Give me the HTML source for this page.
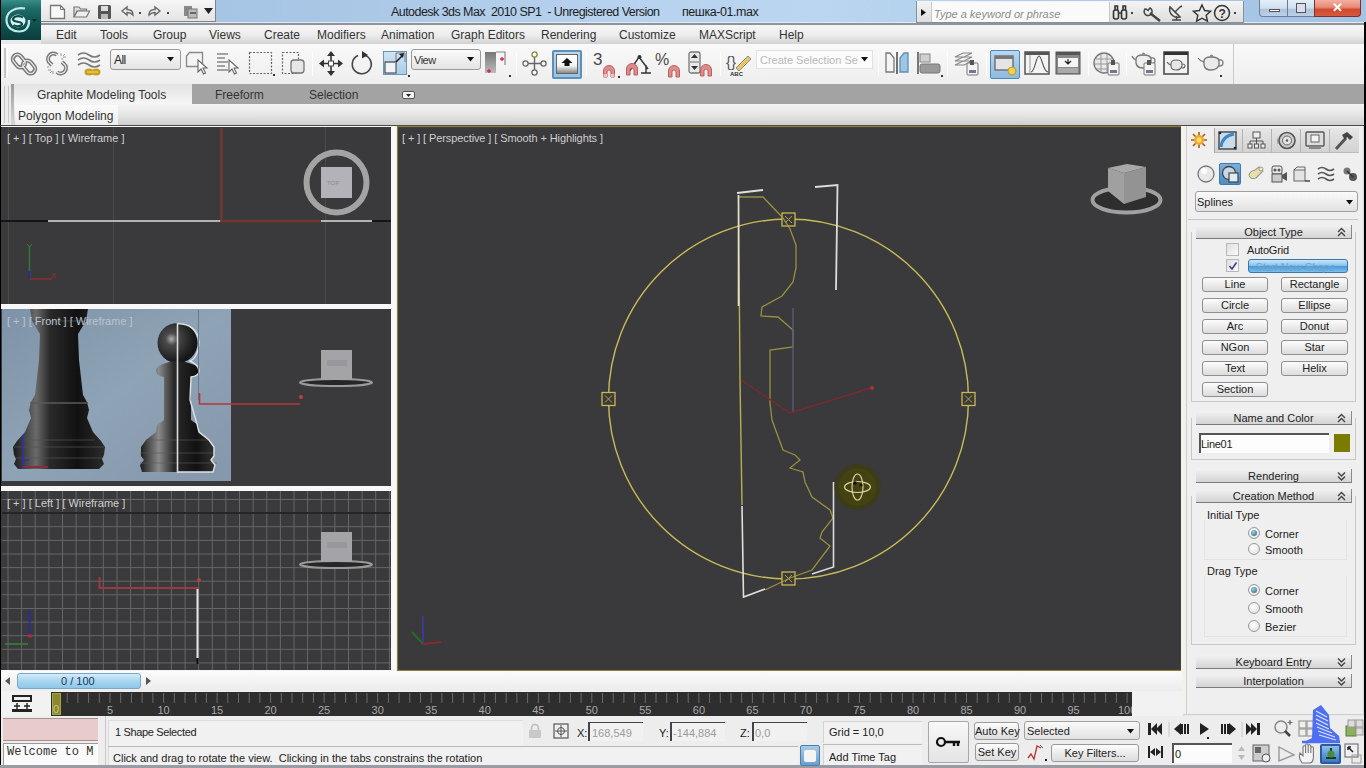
<!DOCTYPE html>
<html><head><meta charset="utf-8">
<style>
*{margin:0;padding:0;box-sizing:border-box}
html,body{width:1366px;height:768px;overflow:hidden;background:#e9e9e9;font-family:"Liberation Sans",sans-serif;position:relative}
.a{position:absolute}
.t{position:absolute;white-space:nowrap;font-size:12px;color:#333;line-height:14px}
svg{position:absolute;overflow:visible}
.sep{position:absolute;width:1px;height:24px;background:#c8c8c8;border-right:1px solid #fff}
.btn{position:absolute;border:1px solid #8f8f8f;border-radius:3px;background:linear-gradient(180deg,#fdfdfd 0%,#ececec 50%,#dcdcdc 100%);font-size:11px;color:#222;text-align:center;line-height:13px;white-space:nowrap}
.rh{position:absolute;left:1196px;width:156px;height:14px;background:linear-gradient(180deg,#f2f2f2,#d4d4d4);border-bottom:1px solid #7a7a7a;border-right:1px solid #8a8a8a;font-size:11px;color:#222;text-align:center;line-height:14px}
.rh i{position:absolute;right:6px;top:0;font-style:normal;font-size:9px;color:#444;line-height:7px;letter-spacing:0}
.vl{position:absolute;font-size:11px;color:#cfcfcf;white-space:nowrap;line-height:12px}
.tk{position:absolute;font-size:11px;color:#a8a8a8;line-height:11px}
.radio{position:absolute;width:12px;height:12px;border-radius:50%;border:1px solid #9a9a9a;background:radial-gradient(circle at 40% 35%,#fff,#dcdcdc)}
.radio.on:after{content:"";position:absolute;left:2px;top:2px;width:6px;height:6px;border-radius:50%;background:radial-gradient(circle at 40% 35%,#9fd0e8,#1d5f80)}
</style></head><body>

<!-- ============ TITLE BAR ============ -->
<div class="a" style="left:0;top:0;width:1366px;height:22px;background:linear-gradient(90deg,#9fbfe0 0%,#aac7e6 25%,#b6d2ee 45%,#bad6f0 60%,#a9c8e8 85%,#a5c3e3 100%)"></div>
<div class="a" style="left:0;top:23px;width:1366px;height:2px;background:#8c939c"></div>
<div class="a" style="left:0;top:0;width:1px;height:768px;background:#000"></div>
<!-- logo -->
<div class="a" style="left:1px;top:0;width:40px;height:40px;background:linear-gradient(180deg,#3a8c88 0%,#1d6a67 22%,#0f5250 60%,#0a3e3d 100%)"></div>
<svg style="left:1px;top:0" width="40" height="40" viewBox="0 0 40 40">
 <path d="M24 8.5 C14 6.5 5 12 5.5 20.5 C6 28 12 31.5 18 31.5 C25 31.5 28.5 27 28 20" fill="none" stroke="#bfeaea" stroke-width="2.2"/>
 <ellipse cx="17" cy="21" rx="7.5" ry="6.5" fill="#d4f2f2"/>
 <path d="M22 17.5 C19 15 12 16 12 19.5 C12 22.5 21 21 21 24 C21 26.5 15 27 12.5 25" fill="none" stroke="#0f4a48" stroke-width="2.2"/>
 <path d="M31 19 l5 0 l-2.5 3z" fill="#062a2a"/>
</svg>
<!-- QAT -->
<div class="a" style="left:41px;top:0;width:175px;height:22px;background:linear-gradient(180deg,#f6f6f6,#e4e4e4);border-right:1px solid #7d838a;border-bottom:1px solid #7d838a"></div>
<svg style="left:49px;top:4px" width="18" height="16"><path d="M1.5 1.5 h10 l4 4 v9 h-14z" fill="#f8f8f8" stroke="#777" stroke-width="1.3"/><path d="M11.5 1.5 v4 h4" fill="none" stroke="#777" stroke-width="1"/></svg>
<svg style="left:73px;top:5px" width="18" height="14"><path d="M1 2 h5 l1.5 2 h6 v2 H4 L1 12z" fill="#ddd" stroke="#777" stroke-width="1.2"/><path d="M1 12 L4.5 6 h12 l-3 6z" fill="#eee" stroke="#777" stroke-width="1.2"/></svg>
<svg style="left:97px;top:4px" width="15" height="16"><rect x="1" y="1" width="13" height="14" rx="1.5" fill="#555"/><rect x="4" y="2" width="7" height="5" fill="#ddd"/><rect x="4" y="10" width="7" height="5" fill="#bbb"/></svg>
<svg style="left:119px;top:5px" width="30" height="14"><path d="M3 6 L8 2 V4.5 C12 4.5 14 6 14 10 C12 8 11 7.5 8 7.5 V10z" fill="none" stroke="#666" stroke-width="1.4"/><rect x="20" y="7" width="2" height="2" fill="#444"/></svg>
<svg style="left:147px;top:5px" width="30" height="14"><path d="M13 6 L8 2 V4.5 C4 4.5 2 6 2 10 C4 8 5 7.5 8 7.5 V10z" fill="none" stroke="#666" stroke-width="1.4"/><rect x="20" y="7" width="2" height="2" fill="#444"/></svg>
<svg style="left:183px;top:4px" width="18" height="16"><rect x="1" y="2" width="8" height="10" fill="#888"/><rect x="5" y="5" width="9" height="9" fill="#bbb" stroke="#777"/><rect x="7" y="8" width="6" height="2" fill="#666"/></svg>
<svg style="left:204px;top:8px" width="10" height="8"><path d="M0 0 h9 l-4.5 6z" fill="#222"/></svg>
<!-- title -->
<div class="t" style="left:391px;top:5px;font-size:12.5px;color:#1e1e1e;letter-spacing:-0.55px">Autodesk 3ds Max&nbsp; 2010 SP1&nbsp; - Unregistered Version</div>
<div class="t" style="left:682px;top:5px;font-size:12.5px;color:#1e1e1e;letter-spacing:-0.45px">пешка-01.max</div>
<!-- info center -->
<div class="a" style="left:916px;top:1px;width:328px;height:22px;background:linear-gradient(180deg,#f4f4f4,#dedede);border:1px solid #8a9098;border-top:none"></div>
<svg style="left:921px;top:9px" width="6" height="8"><path d="M0 0 L5 3.5 L0 7z" fill="#111"/></svg>
<div class="a" style="left:931px;top:2px;width:179px;height:20px;background:#fafafa;border-left:1px solid #c8c8c8;border-right:1px solid #c8c8c8"></div>
<div class="t" style="left:934px;top:7px;font-size:11px;font-style:italic;color:#8c8c8c">Type a keyword or phrase</div>
<svg style="left:1112px;top:4px" width="130" height="18">
 <g fill="none" stroke="#333" stroke-width="1.6"><rect x="1.5" y="6" width="5" height="9" rx="2"/><rect x="9.5" y="6" width="5" height="9" rx="2"/><path d="M3 6 V2 h2.5 V6 M11 6 V2 h2.5 V6 M6.5 9 h3"/></g>
 <rect x="19" y="8" width="2" height="2" fill="#444"/>
 <path d="M33 5 a4 4 0 1 0 5 -1 l-2 2.5 l-2 -1.5z" fill="none" stroke="#444" stroke-width="1.5"/><path d="M38 9 L48 17" stroke="#444" stroke-width="2.4"/>
 <path d="M58 3 a8 8 0 0 0 10 10z" fill="none" stroke="#444" stroke-width="1.5"/><path d="M63 8 l5 -5 M68 3 l2 -1 M60 16 h9 M64.5 12 v4" stroke="#444" stroke-width="1.4"/>
 <path d="M90 1 l2.6 5.5 l6 .7 l-4.4 4 l1.2 6 l-5.4-3 l-5.4 3 l1.2-6 l-4.4-4 l6-.7z" fill="none" stroke="#333" stroke-width="1.4"/>
 <circle cx="110" cy="9" r="7.5" fill="none" stroke="#333" stroke-width="1.5"/><text x="106.5" y="13.5" font-size="12" font-weight="bold" fill="#333" font-family="Liberation Sans">?</text>
 <rect x="122" y="8" width="2" height="2" fill="#444"/>
</svg>
<!-- window buttons -->
<div class="a" style="left:1259px;top:0;width:56px;height:17px;border:1px solid #6d7f96;border-top:none;border-radius:0 0 0 4px;background:linear-gradient(180deg,#e4eef8 0%,#d0e0f0 50%,#aec4dc 60%,#bcd0e6 100%)"></div>
<div class="a" style="left:1287px;top:0;width:1px;height:17px;background:#6d7f96"></div>
<div class="a" style="left:1269px;top:9px;width:11px;height:3px;background:#fff;border:1px solid #555"></div>
<div class="a" style="left:1296px;top:3px;width:10px;height:10px;border:1px solid #555;background:#dde"></div>
<div class="a" style="left:1314px;top:0;width:47px;height:17px;border:1px solid #7a3030;border-top:none;border-radius:0 0 4px 0;background:linear-gradient(180deg,#f4b0a0 0%,#e88a78 45%,#d0482e 60%,#d85a40 100%)"></div>
<div class="t" style="left:1332px;top:1px;font-size:13px;font-weight:bold;color:#fff">✕</div>

<!-- ============ MENU BAR ============ -->
<div class="a" style="left:41px;top:25px;width:1325px;height:19px;background:linear-gradient(180deg,#f6f6f6 0%,#ececec 55%,#d2d2d2 100%)"></div>
<div class="t" style="left:56px;top:28px">Edit</div>
<div class="t" style="left:100px;top:28px">Tools</div>
<div class="t" style="left:153px;top:28px">Group</div>
<div class="t" style="left:209px;top:28px">Views</div>
<div class="t" style="left:264px;top:28px">Create</div>
<div class="t" style="left:317px;top:28px">Modifiers</div>
<div class="t" style="left:381px;top:28px">Animation</div>
<div class="t" style="left:451px;top:28px">Graph Editors</div>
<div class="t" style="left:541px;top:28px">Rendering</div>
<div class="t" style="left:619px;top:28px">Customize</div>
<div class="t" style="left:699px;top:28px">MAXScript</div>
<div class="t" style="left:779px;top:28px">Help</div>

<!-- ============ MAIN TOOLBAR ============ -->
<div class="a" style="left:1px;top:44px;width:1365px;height:40px;background:linear-gradient(180deg,#f9f9f9,#eeeeee)"></div>
<div class="a" style="left:1px;top:44px;width:1233px;height:40px;border-right:1px solid #c9c9c9"></div>
<div class="a" style="left:4px;top:48px;width:2px;height:30px;background:#c4c4c4"></div>
<div class="a" style="left:7px;top:48px;width:1px;height:30px;background:#fff"></div>
<!-- link -->
<svg style="left:12px;top:51px" width="25" height="25"><g fill="none" stroke="#7a7a7a" stroke-width="4.2"><rect x="2.5" y="3" width="9" height="14" rx="4.5" transform="rotate(-40 7 10)"/><rect x="12.5" y="9" width="9" height="14" rx="4.5" transform="rotate(-40 17 16)"/></g><g fill="none" stroke="#f0f0f0" stroke-width="1.2"><rect x="2.5" y="3" width="9" height="14" rx="4.5" transform="rotate(-40 7 10)"/><rect x="12.5" y="9" width="9" height="14" rx="4.5" transform="rotate(-40 17 16)"/></g></svg>
<!-- unlink -->
<svg style="left:44px;top:51px" width="26" height="25"><g fill="none" stroke="#7a7a7a" stroke-width="4"><path d="M13 4 a5 5 0 0 0 -8 1 a5 5 0 0 0 1 7 l2 2"/><path d="M13 21 a5 5 0 0 0 8-1 a5 5 0 0 0 -1-7 l-2-2"/></g><g fill="none" stroke="#f0f0f0" stroke-width="1.1"><path d="M13 4 a5 5 0 0 0 -8 1 a5 5 0 0 0 1 7 l2 2"/><path d="M13 21 a5 5 0 0 0 8-1 a5 5 0 0 0 -1-7 l-2-2"/></g><g stroke="#9a9a9a" stroke-width="1"><path d="M17 2 v3 M19 6 h3 M17 8 l2 0 M21 3 l-2 2 M4 19 h3 M6 22 l2-2 M9 20 v3 M3 16 h2"/></g></svg>
<!-- bind spacewarp -->
<svg style="left:77px;top:51px" width="26" height="25"><g fill="none" stroke="#7a7a7a" stroke-width="1.6"><path d="M1 4 q5.5-4 11 0 t11 0"/><path d="M1 9 q5.5-4 11 0 t11 0"/><path d="M1 14 q5.5-4 11 0 t11 0"/></g><g fill="none" stroke="#c8a020" stroke-width="3"><ellipse cx="12" cy="21" rx="3" ry="2"/><ellipse cx="19" cy="21" rx="3" ry="2"/></g><path d="M10 21 h11" stroke="#e8c040" stroke-width="2"/></svg>
<!-- All dropdown -->
<div class="a" style="left:110px;top:49px;width:71px;height:21px;border:1px solid #9a9a9a;border-radius:3px;background:linear-gradient(180deg,#fafafa,#e4e4e4)"></div>
<div class="t" style="left:114px;top:53px;font-size:12px;color:#222;letter-spacing:-0.6px">All</div>
<svg style="left:167px;top:57px" width="8" height="6"><path d="M0 0h7l-3.5 4.5z" fill="#111"/></svg>
<!-- select object -->
<svg style="left:185px;top:51px" width="24" height="25"><path d="M1.5 5 l3-3.5 h13 v14 h-16z" fill="#f4f4f4" stroke="#888" stroke-width="1.3"/><path d="M13 9 v12 l3-3 l2.5 5 l2-1 l-2.5-5 h4z" fill="#fff" stroke="#666" stroke-width="1.1"/></svg>
<!-- select by name -->
<svg style="left:216px;top:51px" width="26" height="25"><g stroke="#888" stroke-width="1.5"><path d="M1 3h11M1 7h8M1 11h11M1 15h8M1 19h11"/></g><path d="M13 9 v12 l3-3 l2.5 5 l2-1 l-2.5-5 h4z" fill="#fff" stroke="#666" stroke-width="1.1"/></svg>
<!-- rect select -->
<svg style="left:248px;top:51px" width="27" height="25"><rect x="1.5" y="1.5" width="22" height="21" fill="none" stroke="#666" stroke-width="1.2" stroke-dasharray="2 1.5"/><rect x="25" y="23" width="2" height="2" fill="#333"/></svg>
<!-- window/crossing -->
<svg style="left:281px;top:51px" width="25" height="25"><rect x="1.5" y="1.5" width="16" height="21" fill="none" stroke="#666" stroke-width="1.2" stroke-dasharray="2 1.5"/><rect x="10" y="9" width="13" height="13" rx="3" fill="#e6e6e6" stroke="#777" stroke-width="1.3"/></svg>
<div class="sep" style="left:312px;top:52px"></div>
<!-- move -->
<svg style="left:319px;top:51px" width="24" height="25"><g fill="#333"><path d="M12 0 l4 5 h-8z"/><path d="M12 25 l4-5 h-8z"/><path d="M0 12.5 l5-4 v8z"/><path d="M24 12.5 l-5-4 v8z"/></g><path d="M12 4 v17 M4 12.5 h16" stroke="#333" stroke-width="1.6"/><rect x="9.5" y="10" width="5" height="5" fill="#fff" stroke="#444"/></svg>
<!-- rotate -->
<svg style="left:351px;top:51px" width="23" height="25"><path d="M13 4 a9.5 9.5 0 1 1 -6 0.5" fill="none" stroke="#444" stroke-width="1.6"/><path d="M11 0 l6 4 l-6 3.5z" fill="#333"/></svg>
<!-- scale (active) -->
<div class="a" style="left:383px;top:51px;width:24px;height:24px;background:linear-gradient(180deg,#cfe4f4,#a9cde8);border:1px solid #6b95bb"></div>
<svg style="left:383px;top:51px" width="27" height="26"><rect x="2" y="11" width="11" height="11" fill="#eef4f8" stroke="#555" stroke-width="1.2"/><path d="M2 11 h11 v-9 h9 v9" fill="none" stroke="#777" stroke-width="1"/><path d="M13 11 L20 4" stroke="#222" stroke-width="1.6"/><path d="M21 2 l-5 1 l4 4z" fill="#222"/><rect x="25" y="24" width="2" height="2" fill="#333"/></svg>
<!-- View dropdown -->
<div class="a" style="left:411px;top:49px;width:70px;height:21px;border:1px solid #9a9a9a;border-radius:3px;background:linear-gradient(180deg,#fafafa,#e4e4e4)"></div>
<div class="t" style="left:414px;top:53px;font-size:11px;color:#333;letter-spacing:-0.5px">View</div>
<svg style="left:467px;top:57px" width="8" height="6"><path d="M0 0h7l-3.5 4.5z" fill="#111"/></svg>
<!-- pivot -->
<svg style="left:484px;top:51px" width="28" height="26"><rect x="1" y="1" width="11" height="21" fill="#8a8a8a"/><rect x="1" y="1" width="11" height="21" fill="url(#g1)"/><path d="M12 1 h9 v13" fill="#f4f4f4" stroke="#888" stroke-width="1.2"/><path d="M16 8 h4 M18 6 v4 M3 20 h4 M5 18 v4" stroke="#e02040" stroke-width="1.3"/><rect x="25" y="24" width="2" height="2" fill="#333"/><defs><linearGradient id="g1" x1="0" x2="0" y1="0" y2="1"><stop offset="0" stop-color="#777"/><stop offset="1" stop-color="#bbb"/></linearGradient></defs></svg>
<div class="sep" style="left:516px;top:52px"></div>
<!-- manipulate -->
<svg style="left:522px;top:51px" width="25" height="25"><path d="M12.5 5 v15 M4 12.5 h17" stroke="#666" stroke-width="1.4"/><g fill="#f8f8f8" stroke="#666" stroke-width="1.3"><circle cx="12.5" cy="3.5" r="2.6" stroke="#8a8a40"/><circle cx="12.5" cy="21.5" r="2.6"/><circle cx="3.5" cy="12.5" r="2.6"/><circle cx="21.5" cy="12.5" r="2.6"/></g></svg>
<!-- keyboard override active -->
<div class="a" style="left:552px;top:50px;width:30px;height:29px;border:2px solid #5b8fbd;border-radius:2px;background:linear-gradient(180deg,#bcd8ee,#9cc2e0)"></div>
<div class="a" style="left:556px;top:54px;width:22px;height:20px;background:linear-gradient(180deg,#fff,#f4f4f4 60%,#888 100%);border:1px solid #666"></div>
<svg style="left:561px;top:58px" width="12" height="9"><path d="M6 0 l5.5 5 h-3 v3 h-5 v-3 h-3z" fill="#111"/></svg>
<div class="sep" style="left:586px;top:52px"></div>
<!-- snaps -->
<div class="t" style="left:593px;top:51px;font-size:17px;color:#4a4a4a;line-height:18px">3</div>
<svg style="left:602px;top:64px" width="14" height="14"><path d="M1.5 13 v-6 a5.5 5.5 0 0 1 11 0 v6 h-3.5 v-5 a2 2 0 0 0 -4 0 v5z" fill="#e08a8a" stroke="#b86060" stroke-width="1"/><rect x="1.5" y="10" width="3.5" height="3" fill="#f0c0c0"/><rect x="9" y="10" width="3.5" height="3" fill="#f0c0c0"/></svg>
<rect/>
<svg style="left:618px;top:76px" width="2" height="2"><rect width="2" height="2" fill="#333"/></svg>
<svg style="left:625px;top:51px" width="27" height="26"><path d="M4 21 L14 6 L23 18 M16 22 h10 M21 14 v8" fill="none" stroke="#333" stroke-width="1.4"/><circle cx="14.5" cy="6" r="2" fill="#333"/><path d="M1.5 26 v-6 a5.5 5.5 0 0 1 11 0 v6 h-3.5 v-5 a2 2 0 0 0 -4 0 v5z" fill="#e08a8a" stroke="#b86060" stroke-width="1" transform="translate(0,-2)"/></svg>
<div class="t" style="left:655px;top:51px;font-size:16px;color:#4a4a4a;line-height:18px">%</div>
<svg style="left:667px;top:64px" width="14" height="14"><path d="M1.5 13 v-6 a5.5 5.5 0 0 1 11 0 v6 h-3.5 v-5 a2 2 0 0 0 -4 0 v5z" fill="#e08a8a" stroke="#b86060" stroke-width="1"/></svg>
<svg style="left:688px;top:51px" width="26" height="26"><rect x="1" y="1" width="11" height="21" rx="2" fill="#e8e8e8" stroke="#777" stroke-width="1.3"/><path d="M3 7 l3.5-4 l3.5 4z M3 15 l3.5 4 l3.5-4z" fill="#333"/><path d="M2 11 h9" stroke="#777"/><path d="M12.5 25 v-6 a5.5 5.5 0 0 1 11 0 v6 h-3.5 v-5 a2 2 0 0 0 -4 0 v5z" fill="#e08a8a" stroke="#b86060" stroke-width="1"/></svg>
<div class="sep" style="left:720px;top:52px"></div>
<!-- edit named sel -->
<svg style="left:726px;top:51px" width="28" height="26"><text x="0" y="16" font-size="15" fill="#555" font-family="Liberation Sans">{}</text><path d="M10 17 L22 5 l3 3 L13 20z" fill="#e8c860" stroke="#888" stroke-width="1"/><text x="4" y="25" font-size="6" font-weight="bold" fill="#333" font-family="Liberation Sans">ABC</text></svg>
<!-- create selection set -->
<div class="a" style="left:756px;top:50px;width:117px;height:19px;background:#fcfcfc;border:1px solid #e2e2e2"></div>
<div class="t" style="left:760px;top:53px;font-size:11px;color:#b8b8b8">Create Selection Se</div>
<svg style="left:861px;top:57px" width="8" height="6"><path d="M0 0h7l-3.5 4.5z" fill="#111"/></svg>
<div class="sep" style="left:878px;top:52px"></div>
<!-- mirror -->
<svg style="left:884px;top:51px" width="26" height="25"><path d="M2 2 h4 l4 5 v14 h-8z" fill="#f4f4f4" stroke="#777" stroke-width="1.3"/><path d="M13 1 v22" stroke="#444" stroke-width="1.5"/><path d="M24 2 h-4 l-4 5 v14 h8z" fill="#9cc6e4" stroke="#5e8fb8" stroke-width="1.3"/></svg>
<!-- align -->
<svg style="left:916px;top:51px" width="27" height="26"><path d="M2 1 v22" stroke="#777" stroke-width="2"/><rect x="4" y="3" width="10" height="8" fill="#cfcfcf" stroke="#888"/><rect x="4" y="13" width="20" height="9" rx="2" fill="#9a9a9a" stroke="#777"/><rect x="25" y="24" width="2" height="2" fill="#333"/></svg>
<div class="sep" style="left:947px;top:52px"></div>
<!-- layers -->
<svg style="left:954px;top:51px" width="26" height="25"><g fill="#f0f0f0" stroke="#888" stroke-width="1.1"><path d="M1 14 l8-4 h9 l-8 4z"/><path d="M1 10 l8-4 h9 l-8 4z"/><path d="M1 6 l8-4 h9 l-8 4z"/></g><rect x="13" y="12" width="11" height="12" rx="1" fill="#f4f4f4" stroke="#777"/><rect x="16" y="9" width="4" height="5" fill="#555"/><rect x="15" y="19" width="7" height="3" fill="#778"/></svg>
<div class="sep" style="left:986px;top:52px"></div>
<!-- graphite toggle active -->
<div class="a" style="left:990px;top:50px;width:30px;height:29px;border:1px solid #4f86bb;border-radius:2px;background:linear-gradient(180deg,#b9d6ee,#8ebbe0)"></div>
<svg style="left:994px;top:54px" width="24" height="22"><rect x="1" y="2" width="18" height="14" fill="#e4e4e4" stroke="#666" stroke-width="1.3"/><rect x="1" y="2" width="18" height="3" fill="#777"/><circle cx="18" cy="17" r="4" fill="#f0d050" stroke="#c09a20"/></svg>
<!-- curve editor -->
<svg style="left:1024px;top:51px" width="26" height="25"><rect x="1" y="1" width="24" height="22" fill="#f4f4f4" stroke="#555" stroke-width="1.5"/><rect x="1" y="1" width="24" height="3" fill="#555"/><path d="M6 4 v18" stroke="#999"/><path d="M7 21 C11 21 12 5 15 5 C18 5 19 21 24 21" fill="none" stroke="#555" stroke-width="1.1"/></svg>
<!-- schematic -->
<svg style="left:1055px;top:51px" width="26" height="25"><rect x="1" y="1" width="24" height="22" fill="#888" stroke="#555"/><rect x="1" y="1" width="24" height="3" fill="#555"/><rect x="3" y="7" width="20" height="9" fill="#f4f4f4"/><path d="M13 8 v5 M10 10 l3 3 l3-3" stroke="#222" stroke-width="1.2" fill="none"/><rect x="3" y="17" width="20" height="5" fill="#aaa"/></svg>
<div class="sep" style="left:1088px;top:52px"></div>
<!-- material editor -->
<svg style="left:1093px;top:51px" width="27" height="25"><circle cx="11" cy="12" r="10" fill="#e8e8e8" stroke="#777" stroke-width="1.4"/><path d="M3 8 h16 M2 13 h18 M4 18 h14 M8 3 v18 M14 3 v18" stroke="#999" stroke-width="1"/><rect x="15" y="12" width="11" height="12" rx="1" fill="#f4f4f4" stroke="#777"/><rect x="18" y="9" width="4" height="5" fill="#555"/><rect x="17" y="19" width="7" height="3" fill="#778"/></svg>
<div class="sep" style="left:1126px;top:52px"></div>
<!-- render setup -->
<svg style="left:1131px;top:51px" width="27" height="25"><path d="M5 8 q0-4 7-4 q8 0 8 4 v4 q-2 5-8 5 q-6 0-7-5z" fill="#eee" stroke="#777" stroke-width="1.3"/><path d="M5 9 q-3-1 -4-4 M20 7 q4-1 4 3 q0 3-4 3" fill="none" stroke="#777" stroke-width="1.3"/><circle cx="12.5" cy="3" r="1.5" fill="#888"/><rect x="13" y="12" width="11" height="12" rx="1" fill="#f4f4f4" stroke="#777"/><rect x="16" y="9" width="4" height="5" fill="#555"/><rect x="15" y="19" width="7" height="3" fill="#778"/></svg>
<!-- rendered frame -->
<svg style="left:1163px;top:51px" width="26" height="25"><rect x="1" y="1" width="24" height="22" fill="#f2f2f2" stroke="#444" stroke-width="1.5"/><rect x="1" y="1" width="24" height="3" fill="#333"/><path d="M8 13 q0-4 5-4 q6 0 6 4 v2 q-1 4-6 4 q-5 0-5-4z" fill="#e6e6e6" stroke="#666" stroke-width="1.1"/><path d="M8 14 q-3-1 -4-3 M19 13 q3 0 3 2 q0 2-3 2" fill="none" stroke="#666" stroke-width="1.1"/></svg>
<!-- render -->
<svg style="left:1197px;top:51px" width="26" height="26"><path d="M7 10 q0-4 7-4 q8 0 8 4 v4 q-2 5-8 5 q-6 0-7-5z" fill="#eaeaea" stroke="#777" stroke-width="1.3"/><path d="M7 11 q-4-1 -6-4 M22 9 q4-1 4 3 q0 3-4 3" fill="none" stroke="#777" stroke-width="1.3"/><circle cx="14.5" cy="5" r="1.6" fill="#888"/><rect x="23" y="24" width="2" height="2" fill="#333"/></svg>


<!-- ============ RIBBON ============ -->
<div class="a" style="left:1px;top:84px;width:1365px;height:20px;background:#a3a3a3"></div>
<div class="a" style="left:1px;top:104px;width:1365px;height:21px;background:linear-gradient(180deg,#f4f4f4 0%,#e6e6e6 50%,#cfcfcf 100%)"></div>
<div class="a" style="left:14px;top:84px;width:178px;height:20px;background:linear-gradient(180deg,#e2e2e2,#f6f6f6)"></div>
<div class="a" style="left:1px;top:84px;width:10px;height:41px;background:#ececec"></div><div class="a" style="left:4px;top:86px;width:1px;height:37px;background:#c4c4c4"></div><div class="a" style="left:8px;top:86px;width:1px;height:37px;background:#c8c8c8"></div><div class="a" style="left:11px;top:84px;width:3px;height:41px;background:linear-gradient(180deg,#9a9a9a,#d8d8d8)"></div>
<div class="t" style="left:37px;top:88px">Graphite Modeling Tools</div>
<div class="t" style="left:215px;top:88px">Freeform</div>
<div class="t" style="left:309px;top:88px">Selection</div>
<div class="a" style="left:402px;top:91px;width:13px;height:8px;border:1px solid #555;border-radius:2px;background:#f4f4f4"></div>
<svg style="left:406px;top:94px" width="6" height="4"><path d="M0 0h5l-2.5 3z" fill="#222"/></svg>
<div class="a" style="left:15px;top:105px;width:103px;height:20px;background:linear-gradient(180deg,#fbfbfb,#eeeeee)"></div>
<div class="t" style="left:18px;top:109px">Polygon Modeling</div>
<div class="a" style="left:0;top:125px;width:1366px;height:1px;background:#4a4a4a"></div>

<!-- ============ VIEWPORTS ============ -->
<div class="a" style="left:1px;top:126px;width:1182px;height:545px;background:#f6f6f6"></div>
<svg style="left:0;top:0" width="1366" height="768">
 <defs>
  <linearGradient id="bgimg" x1="0" y1="0" x2="1" y2="1"><stop offset="0" stop-color="#7f93a8"/><stop offset=".5" stop-color="#8fa3b6"/><stop offset="1" stop-color="#8597aa"/></linearGradient>
  <linearGradient id="rook" x1="0" x2="1"><stop offset="0" stop-color="#1a1a1a"/><stop offset=".25" stop-color="#6a6a6a"/><stop offset=".4" stop-color="#2a2a2a"/><stop offset=".7" stop-color="#111"/><stop offset="1" stop-color="#2c2c2c"/></linearGradient>
  <linearGradient id="pawn" x1="0" x2="1"><stop offset="0" stop-color="#1a1a1a"/><stop offset=".25" stop-color="#8a8a8a"/><stop offset=".45" stop-color="#2a2a2a"/><stop offset=".75" stop-color="#111"/><stop offset="1" stop-color="#333"/></linearGradient>
  <radialGradient id="head" cx=".35" cy=".4" r=".6"><stop offset="0" stop-color="#b0b0b0"/><stop offset=".25" stop-color="#4a4a4a"/><stop offset="1" stop-color="#151515"/></radialGradient>
 </defs>
 <!-- top viewport -->
 <rect x="1" y="127" width="390" height="177" fill="#3a393b"/>
 <g stroke="#4a4a4a" stroke-width="1"><path d="M8.5 127 V304"/><path d="M113.5 127 V304"/><path d="M325.5 127 V304"/></g>
 <path d="M1 221 H48" stroke="#151515" stroke-width="2"/>
 <path d="M48 221 H221" stroke="#dcdcdc" stroke-width="1.7"/>
 <path d="M321 221 H372" stroke="#dcdcdc" stroke-width="1.7"/>
 <path d="M372 221 H391" stroke="#151515" stroke-width="2"/>
 <path d="M221.5 128 V221 H321" stroke="#70382f" stroke-width="2.6" fill="none"/>
 <circle cx="336.5" cy="182.5" r="30" fill="none" stroke="#a3a3a3" stroke-width="6"/>
 <rect x="321" y="167" width="31" height="31" fill="#b2b2b8"/>
 <text x="327" y="185" font-size="6" fill="#8a8a90" font-family="Liberation Sans">TOP</text>
 <g stroke-width="1.5" fill="none"><path d="M29.5 246 V278" stroke="#2d7a3a"/><path d="M29 279 H52" stroke="#902c2c"/><path d="M29 271 V279" stroke="#2a2a90" stroke-width="2"/><path d="M27 244 l2.5 3 l2.5-3 M29.5 247 v3" stroke="#2d7a3a" stroke-width="1"/><path d="M52 273 l4 5 M56 273 l-4 5" stroke="#902c2c" stroke-width="1"/></g>
 <!-- front viewport -->
 <rect x="1" y="309" width="390" height="177" fill="#3a393b"/>
 <rect x="2" y="309" width="229" height="172" fill="url(#bgimg)"/>
 <path d="M30 309 H88 L86 321 L78 334 L79 360 L83 395 L87 402 L89 410 L87 418 L93 432 L101 441 L105 447 L104 455 L102 459 L104 464 L99 469 H18 L14 464 L16 459 L14 455 L13 447 L17 441 L25 432 L31 418 L29 410 L31 402 L35 395 L39 360 L40 334 L32 321z" fill="url(#rook)"/>
 <path d="M22 440 H95 M14 447 H104 M16 458 H102" stroke="#555" stroke-width="1.2" opacity=".7"/>
 <path d="M30 403 H88" stroke="#5a5a5a" stroke-width="1.5"/><path d="M33 321 H85" stroke="#444" stroke-width="1"/>
 <circle cx="177.5" cy="343" r="20" fill="url(#head)"/>
 <path d="M163 364 Q177 358 192 364 Q199 366 199 371 Q199 376 191 377 L191 420 L198 425 L199 432 L209 440 L214 447 L214 456 L211 460 L215 465 L213 472 H142 L140 465 L144 460 L141 456 L141 447 L146 440 L156 432 L157 425 L164 420 L164 377 Q156 376 156 371 Q156 366 163 364z" fill="url(#pawn)"/>
 <path d="M146 440 H209 M140 453 H215 M140 463 H217" stroke="#5a5a5a" stroke-width="1.2" opacity=".6"/>
 <path d="M177.5 323.5 Q197 324 199 342 Q198 358 190 361 Q199 365 199 371 Q199 376 191 377 L190 400 L197 424 L199 432 L209 440 L214 447 L214 456 L211 460 L215 465 L213 472 H177.5" fill="none" stroke="#dfe3e6" stroke-width="1.4"/>
 <path d="M177.5 323 V473" stroke="#dcdcdc" stroke-width="1.6"/>
 <path d="M198.5 310 V400" stroke="#6a7a8c" stroke-width="1"/>
 <path d="M199.5 393 V404 H300" stroke="#b23838" stroke-width="1.6" fill="none"/>
 <circle cx="301" cy="397" r="2" fill="#c04040"/>
 <path d="M23 435 V467 M23 467 H45 M23 460 l6 0" stroke-width="1.5" fill="none" stroke="#3030b0"/>
 <path d="M23 467 H48" stroke="#a02828" stroke-width="1.6"/>
 <ellipse cx="336" cy="382.5" rx="36" ry="3.5" fill="#262626" stroke="#9a9a9a" stroke-width="2.2"/>
 <rect x="321" y="350" width="31" height="30" fill="#a4a4a8"/>
 <rect x="327" y="360" width="20" height="6" fill="#98989c"/>
 <!-- left viewport -->
 <rect x="1" y="491" width="390" height="179" fill="#3a393b"/>
 <g stroke="#666568" stroke-width="1">
<path d="M8.0 491 V670"/>
<path d="M21.6 491 V670"/>
<path d="M35.2 491 V670"/>
<path d="M48.9 491 V670"/>
<path d="M62.5 491 V670"/>
<path d="M76.1 491 V670"/>
<path d="M89.7 491 V670"/>
<path d="M103.3 491 V670"/>
<path d="M117.0 491 V670"/>
<path d="M130.6 491 V670"/>
<path d="M144.2 491 V670"/>
<path d="M157.8 491 V670"/>
<path d="M171.4 491 V670"/>
<path d="M185.1 491 V670"/>
<path d="M198.7 491 V670"/>
<path d="M212.3 491 V670"/>
<path d="M225.9 491 V670"/>
<path d="M239.5 491 V670"/>
<path d="M253.2 491 V670"/>
<path d="M266.8 491 V670"/>
<path d="M280.4 491 V670"/>
<path d="M294.0 491 V670"/>
<path d="M307.6 491 V670"/>
<path d="M321.3 491 V670"/>
<path d="M334.9 491 V670"/>
<path d="M348.5 491 V670"/>
<path d="M362.1 491 V670"/>
<path d="M375.7 491 V670"/>
<path d="M389.4 491 V670"/>
<path d="M2 499.5 H391"/>
<path d="M2 513.1 H391"/>
<path d="M2 526.7 H391"/>
<path d="M2 540.4 H391"/>
<path d="M2 554.0 H391"/>
<path d="M2 567.6 H391"/>
<path d="M2 581.2 H391"/>
<path d="M2 594.8 H391"/>
<path d="M2 608.5 H391"/>
<path d="M2 622.1 H391"/>
<path d="M2 635.7 H391"/>
<path d="M2 649.3 H391"/>
<path d="M2 662.9 H391"/>
 </g>
 <path d="M2 513 H391" stroke="#252526" stroke-width="2"/>
 <path d="M99.5 577 V588 H198" stroke="#9a3a40" stroke-width="2" fill="none"/>
 <circle cx="199" cy="580" r="2" fill="#b84040"/>
 <path d="M197.5 589 V658" stroke="#e6e6e6" stroke-width="2"/>
 <path d="M197.5 658 V664" stroke="#111" stroke-width="2"/>
 <ellipse cx="336" cy="564.5" rx="36" ry="3.5" fill="#262626" stroke="#9a9a9a" stroke-width="2.2"/>
 <rect x="321" y="532" width="31" height="30" fill="#a4a4a8"/>
 <rect x="327" y="542" width="20" height="6" fill="#98989c"/>
 <g stroke-width="1.5" fill="none"><path d="M29.5 610 V638" stroke="#2a2ab0"/><path d="M5 644 H28" stroke="#2d8a3a"/><path d="M28 636 l4 0" stroke="#b03030" stroke-width="3"/></g>
 <!-- dividers -->
 <rect x="1" y="304" width="390" height="5" fill="#f8f8f8"/>
 <rect x="1" y="486" width="390" height="5" fill="#f8f8f8"/>
 <rect x="391" y="126" width="6" height="545" fill="#f8f8f8"/>
</svg>
<div class="vl" style="left:7px;top:132px">[ + ] [ Top ] [ Wireframe ]</div>
<div class="vl" style="left:7px;top:315px;color:#b8c4d0">[ + ] [ Front ] [ Wireframe ]</div>
<div class="vl" style="left:7px;top:497px">[ + ] [ Left ] [ Wireframe ]</div>

<!-- perspective viewport -->
<svg style="left:0;top:0" width="1366" height="768">
 <rect x="397.5" y="126.5" width="784" height="544" fill="#3a393b" stroke="#8c7e3a" stroke-width="1.2"/>
 <!-- circle -->
 <circle cx="788.5" cy="399" r="180" fill="none" stroke="#c8bc58" stroke-width="1.4"/>
 <g fill="#3a393b" stroke="#c8b850" stroke-width="1.3">
  <rect x="782" y="213" width="13" height="13"/>
  <rect x="782" y="572" width="13" height="13"/>
  <rect x="602" y="392.5" width="13" height="13"/>
  <rect x="962" y="392.5" width="13" height="13"/>
 </g>
 <g stroke="#b0a448" stroke-width="1"><path d="M785 216 l7 7 M792 216 l-7 7"/><path d="M785 575 l7 7 M792 575 l-7 7"/><path d="M605 395.5 l7 7 M612 395.5 l-7 7"/><path d="M965 395.5 l7 7 M972 395.5 l-7 7"/></g>
 <!-- profile (yellow) -->
 <path stroke-opacity=".85" d="M739 197 L763 197 L783 218 L790 229 L796 245 L796 268 L793 282 L782 296 L762 307 L761 316 L778 317 L793 330 L793 347 L770 350 L770 403 L772 420 L783 450 L795 455 L800 460 L790 468 L803 472 L805 482 L812 497 L830 510 L833 518 L822 532 L820 538 L830 546 L812 570 L790 578 L765 590" fill="none" stroke="#a8a040" stroke-width="1.3"/>
 <!-- left long line -->
 <path d="M738.5 195 L740 380 L742 505" fill="none" stroke="#b8b050" stroke-width="1.4"/>
 <path d="M738.5 306 L738.5 195" stroke="#e0e0d8" stroke-width="1.6"/>
 <path d="M737 193 L763 190" stroke="#e0e0e0" stroke-width="1.8"/>
 <path d="M742 506 L743.5 597 L765 589" fill="none" stroke="#e0e0d8" stroke-width="1.6"/>
 <!-- right top white -->
 <path d="M815 187 L837.5 185 L836 290" fill="none" stroke="#dcdcdc" stroke-width="1.8"/>
 <!-- right bottom white -->
 <path d="M833.5 482 L833.5 567 L812 574" fill="none" stroke="#dcdcdc" stroke-width="1.6"/>
 <!-- gizmo axes -->
 <path d="M793 308 V413" stroke="#555a78" stroke-width="1.5"/>
 <path d="M741 380 L790 413 L871 388" fill="none" stroke="#7a2a2e" stroke-width="1.4"/>
 <circle cx="872" cy="388" r="2" fill="#a83434"/>
 <!-- orbit gizmo -->
 <circle cx="857.5" cy="487" r="23" fill="#3c3b1a"/>
 <circle cx="857.5" cy="487" r="19" fill="#434210"/>
 <g fill="none" stroke="#d8d0a0" stroke-width="1.2"><ellipse cx="857.5" cy="487" rx="13" ry="5.5"/><ellipse cx="857.5" cy="487" rx="5.5" ry="13"/></g>
 <circle cx="855" cy="483" r="1.8" fill="#111"/><circle cx="861" cy="485" r="1.5" fill="#111"/>
 <!-- viewcube -->
 <ellipse cx="1126.5" cy="200" rx="34" ry="12.5" fill="#2e2e2e" stroke="#a0a0a0" stroke-width="4"/>
 <path d="M1108 168 L1124 173 L1124 204 L1108 191z" fill="#a0a0a0"/>
 <path d="M1124 173 L1146 167 L1146 197 L1124 204z" fill="#939393"/>
 <path d="M1108 168 L1127 164 L1146 167 L1124 173z" fill="#a9a9a9"/>
 <!-- tripod -->
 <g stroke-width="2" fill="none"><path d="M423 644 V616" stroke="#3a3a90"/><path d="M423 644 L412 632" stroke="#2a6a2a"/><path d="M423 644 L441 642" stroke="#8a2a2a"/></g>
</svg>
<div class="vl" style="left:402px;top:132px;letter-spacing:-0.1px">[ + ] [ Perspective ] [ Smooth + Highlights ]</div>

<!-- ============ COMMAND PANEL ============ -->
<div class="a" style="left:1182px;top:126px;width:184px;height:589px;background:#efefef"></div>
<div class="a" style="left:1181px;top:126px;width:5px;height:589px;background:#f2f1ec"></div><div class="a" style="left:1186px;top:126px;width:1px;height:589px;background:#d0cdd4"></div>
<div class="a" style="left:1363px;top:126px;width:3px;height:589px;background:#d8d8d8"></div>
<!-- tabs -->
<div class="a" style="left:1214px;top:128px;width:145px;height:25px;background:linear-gradient(180deg,#e6e6e6,#d2d2d2);border-bottom:1px solid #bcbcbc"></div>
<div class="a" style="left:1214px;top:128px;width:1px;height:25px;background:#aaa"></div>
<div class="a" style="left:1242px;top:129px;width:1px;height:24px;background:#b4b4b4"></div>
<div class="a" style="left:1271px;top:129px;width:1px;height:24px;background:#b4b4b4"></div>
<div class="a" style="left:1300px;top:129px;width:1px;height:24px;background:#b4b4b4"></div>
<div class="a" style="left:1329px;top:129px;width:1px;height:24px;background:#b4b4b4"></div>
<svg style="left:1189px;top:131px" width="20" height="18"><g stroke="#a06018" stroke-width="1.6"><path d="M10 1 V17 M2 9 H18 M4 3 L16 15 M16 3 L4 15"/></g><circle cx="10" cy="9" r="5" fill="#f4a830"/><circle cx="10" cy="9" r="2.5" fill="#ffe070"/></svg>
<svg style="left:1218px;top:131px" width="20" height="20"><rect x="1" y="1" width="17" height="17" fill="#c8dcec" stroke="#444" stroke-width="1.4"/><path d="M3 16 Q4 5 16 3" fill="none" stroke="#3d88c8" stroke-width="3"/><circle cx="2" cy="2" r="1.3" fill="#222"/><circle cx="17" cy="17" r="1.3" fill="#222"/></svg>
<svg style="left:1247px;top:131px" width="20" height="20"><rect x="6" y="1" width="7" height="6" fill="#eee" stroke="#555"/><path d="M9.5 7 V10 M3 10 H16 M3 10 v3 M9.5 10 v3 M16 10 v3" stroke="#555" fill="none"/><rect x="1" y="13" width="4" height="4" fill="#eee" stroke="#555"/><rect x="7.5" y="13" width="4" height="4" fill="#eee" stroke="#555"/><rect x="14" y="13" width="4" height="4" fill="#eee" stroke="#555"/></svg>
<svg style="left:1276px;top:131px" width="20" height="20"><circle cx="11" cy="9.5" r="8" fill="#ccc" stroke="#555" stroke-width="1.6"/><circle cx="11" cy="9.5" r="4.5" fill="#e4e4e4" stroke="#666"/><circle cx="11" cy="9.5" r="1.2" fill="#555"/><path d="M2 7 a9 9 0 0 0 0 6" stroke="#999" fill="none"/></svg>
<svg style="left:1305px;top:131px" width="20" height="20"><rect x="1" y="1" width="18" height="14" rx="1" fill="#ddd" stroke="#555" stroke-width="1.4"/><rect x="6" y="4" width="8" height="7" fill="#f4f4f4" stroke="#666"/><rect x="4" y="15" width="12" height="3" fill="#888"/></svg>
<svg style="left:1334px;top:131px" width="20" height="20"><path d="M2 18 L12 7" stroke="#555" stroke-width="3"/><path d="M8 4 L13 1 L19 6 L16 9 L13 6 L11 9z" fill="#444"/></svg>
<!-- category icons -->
<div class="a" style="left:1219px;top:163px;width:22px;height:22px;border:1px solid #4477aa;border-radius:2px;background:linear-gradient(180deg,#7ab0dc,#4a8cc4)"></div>
<svg style="left:1197px;top:165px" width="20" height="20"><circle cx="9" cy="9" r="8" fill="#e8e8e8" stroke="#777" stroke-width="1.3"/><circle cx="7" cy="6" r="3" fill="#fff"/></svg>
<svg style="left:1221px;top:165px" width="20" height="20"><circle cx="8" cy="8" r="6.5" fill="#c8d8e8" stroke="#444" stroke-width="1.3"/><rect x="8" y="8" width="9" height="9" fill="#e0ecf4" stroke="#444" stroke-width="1.2"/></svg>
<svg style="left:1247px;top:165px" width="18" height="20"><path d="M12 2 L16 6 L9 13 Q3 15 2 10 Q3 6 8 5z" fill="#e6e0a8" stroke="#999" stroke-width="1.1"/><circle cx="14" cy="4" r="2" fill="#f4f0c0" stroke="#999"/></svg>
<svg style="left:1270px;top:165px" width="18" height="20"><rect x="2" y="1" width="10" height="8" rx="2" fill="#e8e8e8" stroke="#555"/><rect x="2" y="9" width="10" height="8" fill="#ccc" stroke="#555"/><path d="M12 10 l5-3 v9 l-5-3z" fill="#555"/><circle cx="5" cy="5" r="1.5" fill="#555"/><circle cx="9" cy="5" r="1.5" fill="#555"/></svg>
<svg style="left:1293px;top:165px" width="18" height="20"><rect x="1" y="5" width="11" height="11" fill="#e4e4e4" stroke="#666"/><path d="M1 5 l3-3 h8 l0 3" fill="none" stroke="#666"/><path d="M12 16 h5" stroke="#444" stroke-width="1.5"/></svg>
<svg style="left:1317px;top:165px" width="18" height="20"><g fill="none" stroke="#555" stroke-width="1.6"><path d="M1 4 q4-3 8 0 t8 0"/><path d="M1 9 q4-3 8 0 t8 0"/><path d="M1 14 q4-3 8 0 t8 0"/></g></svg>
<svg style="left:1342px;top:165px" width="16" height="20"><circle cx="11" cy="12" r="4" fill="#555"/><circle cx="5" cy="6" r="3.5" fill="#777"/><path d="M5 6 L11 12" stroke="#333" stroke-width="1.5"/></svg>
<!-- splines dropdown -->
<div class="a" style="left:1195px;top:191px;width:163px;height:21px;border:1px solid #a0a0a0;border-radius:3px;background:linear-gradient(180deg,#fafafa,#e2e2e2)"></div>
<div class="t" style="left:1197px;top:195px;font-size:11px;color:#222">Splines</div>
<svg style="left:1346px;top:200px" width="8" height="6"><path d="M0 0h7l-3.5 4.5z" fill="#111"/></svg>
<div class="a" style="left:1188px;top:219px;width:170px;height:1px;background:#c4c4c4"></div>
<!-- Object type rollout -->
<div class="a" style="left:1191px;top:232px;width:165px;height:170px;border:1px solid #c8c8c8;border-top:none"></div>
<div class="rh" style="top:225px">Object Type<svg style="right:5px;top:2px;left:auto" width="9" height="10"><path d="M1 5 L4.5 1.5 L8 5 M1 9 L4.5 5.5 L8 9" fill="none" stroke="#444" stroke-width="1.4"/></svg></div>
<div class="a" style="left:1226px;top:243px;width:13px;height:13px;border:1px solid #b8b8b8;background:linear-gradient(135deg,#dedede,#fafafa)"></div>
<div class="t" style="left:1247px;top:243px;font-size:11px;color:#222;letter-spacing:-0.2px">AutoGrid</div>
<div class="a" style="left:1226px;top:259px;width:13px;height:13px;border:1px solid #b8b8b8;background:linear-gradient(135deg,#dedede,#fafafa)"></div>
<svg style="left:1228px;top:261px" width="10" height="10"><path d="M1.5 5 L4 8 L8.5 1.5" fill="none" stroke="#3a3a8a" stroke-width="1.5"/></svg>
<div class="a" style="left:1248px;top:259px;width:100px;height:14px;border:1px solid #3a78b0;border-radius:3px;background:linear-gradient(180deg,#c8e6f8 0%,#8cc4ec 45%,#4a9ad8 55%,#7cc0ec 100%)"></div>
<div class="t" style="left:1255px;top:260px;font-size:11px;font-style:italic;color:#6aa4d4;letter-spacing:-0.2px">Start New Shape</div>
<div class="btn" style="left:1202px;top:277px;width:66px;height:15px">Line</div>
<div class="btn" style="left:1281px;top:277px;width:67px;height:15px">Rectangle</div>
<div class="btn" style="left:1202px;top:298px;width:66px;height:15px">Circle</div>
<div class="btn" style="left:1281px;top:298px;width:67px;height:15px">Ellipse</div>
<div class="btn" style="left:1202px;top:319px;width:66px;height:15px">Arc</div>
<div class="btn" style="left:1281px;top:319px;width:67px;height:15px">Donut</div>
<div class="btn" style="left:1202px;top:340px;width:66px;height:15px">NGon</div>
<div class="btn" style="left:1281px;top:340px;width:67px;height:15px">Star</div>
<div class="btn" style="left:1202px;top:361px;width:66px;height:15px">Text</div>
<div class="btn" style="left:1281px;top:361px;width:67px;height:15px">Helix</div>
<div class="btn" style="left:1202px;top:382px;width:66px;height:15px">Section</div>
<!-- name and color -->
<div class="a" style="left:1191px;top:418px;width:165px;height:42px;border:1px solid #c8c8c8;border-top:none"></div>
<div class="rh" style="top:411px">Name and Color<svg style="right:5px;top:2px;left:auto" width="9" height="10"><path d="M1 5 L4.5 1.5 L8 5 M1 9 L4.5 5.5 L8 9" fill="none" stroke="#444" stroke-width="1.4"/></svg></div>
<div class="a" style="left:1199px;top:433px;width:130px;height:20px;background:#fdfdfd;border-top:2px solid #555;border-left:2px solid #555"></div>
<div class="t" style="left:1201px;top:437px;font-size:11px;color:#222;letter-spacing:-0.3px">Line01</div>
<div class="a" style="left:1334px;top:434px;width:16px;height:18px;background:#7a7c00"></div>
<!-- rendering -->
<div class="rh" style="top:469px">Rendering<svg style="right:5px;top:2px;left:auto" width="9" height="10"><path d="M1 1.5 L4.5 5 L8 1.5 M1 5.5 L4.5 9 L8 5.5" fill="none" stroke="#444" stroke-width="1.4"/></svg></div>
<!-- creation method -->
<div class="a" style="left:1191px;top:496px;width:165px;height:149px;border:1px solid #c8c8c8;border-top:none"></div>
<div class="rh" style="top:489px">Creation Method<svg style="right:5px;top:2px;left:auto" width="9" height="10"><path d="M1 5 L4.5 1.5 L8 5 M1 9 L4.5 5.5 L8 9" fill="none" stroke="#444" stroke-width="1.4"/></svg></div>
<div class="a" style="left:1204px;top:520px;width:143px;height:40px;border:1px solid #e4e4e4;border-top:none"></div>
<div class="t" style="left:1207px;top:508px;font-size:11px;color:#222">Initial Type</div>
<div class="radio on" style="left:1248px;top:527px"></div>
<div class="t" style="left:1265px;top:527px;font-size:11px;color:#222">Corner</div>
<div class="radio" style="left:1248px;top:543px"></div>
<div class="t" style="left:1265px;top:543px;font-size:11px;color:#222">Smooth</div>
<div class="a" style="left:1204px;top:576px;width:143px;height:61px;border:1px solid #e4e4e4;border-top:none"></div>
<div class="t" style="left:1207px;top:564px;font-size:11px;color:#222">Drag Type</div>
<div class="radio on" style="left:1248px;top:584px"></div>
<div class="t" style="left:1265px;top:584px;font-size:11px;color:#222">Corner</div>
<div class="radio" style="left:1248px;top:602px"></div>
<div class="t" style="left:1265px;top:602px;font-size:11px;color:#222">Smooth</div>
<div class="radio" style="left:1248px;top:620px"></div>
<div class="t" style="left:1265px;top:620px;font-size:11px;color:#222">Bezier</div>
<div class="rh" style="top:655px">Keyboard Entry<svg style="right:5px;top:2px;left:auto" width="9" height="10"><path d="M1 1.5 L4.5 5 L8 1.5 M1 5.5 L4.5 9 L8 5.5" fill="none" stroke="#444" stroke-width="1.4"/></svg></div>
<div class="rh" style="top:674px">Interpolation<svg style="right:5px;top:2px;left:auto" width="9" height="10"><path d="M1 1.5 L4.5 5 L8 1.5 M1 5.5 L4.5 9 L8 5.5" fill="none" stroke="#444" stroke-width="1.4"/></svg></div>

<div class="a" style="left:1183px;top:714px;width:181px;height:1px;background:#cfcfcf"></div>
<!-- ============ TIME SLIDER ============ -->
<div class="a" style="left:1px;top:671px;width:1181px;height:20px;background:linear-gradient(180deg,#fbfbfb,#ececec)"></div>
<svg style="left:5px;top:677px" width="6" height="8"><path d="M5 0 L0 4 L5 8z" fill="#555"/></svg>
<div class="a" style="left:17px;top:673px;width:124px;height:16px;border:1px solid #7aa6c8;border-radius:3px;background:linear-gradient(180deg,#d4ecfa 0%,#a8d6f0 50%,#8ec6e8 100%)"></div>
<div class="t" style="left:61px;top:675px;font-size:11px;color:#1d3a5a;line-height:13px">0 / 100</div>
<svg style="left:146px;top:677px" width="6" height="8"><path d="M0 0 L5 4 L0 8z" fill="#555"/></svg>
<!-- ============ TRACK BAR ============ -->
<div class="a" style="left:1px;top:691px;width:1181px;height:25px;background:#f2f2f2"></div>
<svg style="left:11px;top:694px" width="24" height="20"><rect x="1" y="1" width="20" height="7" fill="#222"/><rect x="3" y="3" width="16" height="3" fill="#eee"/><path d="M6 9 v6 M16 9 v6 M3 12 h6 M13 12 h6" stroke="#222" stroke-width="1.4"/><rect x="1" y="15" width="20" height="3" fill="#222"/></svg>
<div class="a" style="left:51px;top:692px;width:1081px;height:24px;background:#2e2e2e"></div>
<svg style="left:0;top:0" width="1366" height="768"><path d="M56.5 693 V703 M67.2 693 V703 M77.9 693 V703 M88.6 693 V703 M99.3 693 V703 M110.0 693 V703 M120.7 693 V703 M131.4 693 V703 M142.1 693 V703 M152.9 693 V703 M163.6 693 V703 M174.3 693 V703 M185.0 693 V703 M195.7 693 V703 M206.4 693 V703 M217.1 693 V703 M227.8 693 V703 M238.5 693 V703 M249.2 693 V703 M259.9 693 V703 M270.6 693 V703 M281.3 693 V703 M292.0 693 V703 M302.7 693 V703 M313.4 693 V703 M324.1 693 V703 M334.9 693 V703 M345.6 693 V703 M356.3 693 V703 M367.0 693 V703 M377.7 693 V703 M388.4 693 V703 M399.1 693 V703 M409.8 693 V703 M420.5 693 V703 M431.2 693 V703 M441.9 693 V703 M452.6 693 V703 M463.3 693 V703 M474.0 693 V703 M484.7 693 V703 M495.4 693 V703 M506.2 693 V703 M516.9 693 V703 M527.6 693 V703 M538.3 693 V703 M549.0 693 V703 M559.7 693 V703 M570.4 693 V703 M581.1 693 V703 M591.8 693 V703 M602.5 693 V703 M613.2 693 V703 M623.9 693 V703 M634.6 693 V703 M645.3 693 V703 M656.0 693 V703 M666.7 693 V703 M677.4 693 V703 M688.2 693 V703 M698.9 693 V703 M709.6 693 V703 M720.3 693 V703 M731.0 693 V703 M741.7 693 V703 M752.4 693 V703 M763.1 693 V703 M773.8 693 V703 M784.5 693 V703 M795.2 693 V703 M805.9 693 V703 M816.6 693 V703 M827.3 693 V703 M838.0 693 V703 M848.7 693 V703 M859.4 693 V703 M870.2 693 V703 M880.9 693 V703 M891.6 693 V703 M902.3 693 V703 M913.0 693 V703 M923.7 693 V703 M934.4 693 V703 M945.1 693 V703 M955.8 693 V703 M966.5 693 V703 M977.2 693 V703 M987.9 693 V703 M998.6 693 V703 M1009.3 693 V703 M1020.0 693 V703 M1030.7 693 V703 M1041.5 693 V703 M1052.2 693 V703 M1062.9 693 V703 M1073.6 693 V703 M1084.3 693 V703 M1095.0 693 V703 M1105.7 693 V703 M1116.4 693 V703 M1127.1 693 V703" stroke="#6a6a6a" stroke-width="1"/></svg>
<div class="tk" style="left:110.0px;top:705px;transform:translateX(-50%)">5</div>
<div class="tk" style="left:163.6px;top:705px;transform:translateX(-50%)">10</div>
<div class="tk" style="left:217.1px;top:705px;transform:translateX(-50%)">15</div>
<div class="tk" style="left:270.6px;top:705px;transform:translateX(-50%)">20</div>
<div class="tk" style="left:324.1px;top:705px;transform:translateX(-50%)">25</div>
<div class="tk" style="left:377.7px;top:705px;transform:translateX(-50%)">30</div>
<div class="tk" style="left:431.2px;top:705px;transform:translateX(-50%)">35</div>
<div class="tk" style="left:484.7px;top:705px;transform:translateX(-50%)">40</div>
<div class="tk" style="left:538.3px;top:705px;transform:translateX(-50%)">45</div>
<div class="tk" style="left:591.8px;top:705px;transform:translateX(-50%)">50</div>
<div class="tk" style="left:645.3px;top:705px;transform:translateX(-50%)">55</div>
<div class="tk" style="left:698.9px;top:705px;transform:translateX(-50%)">60</div>
<div class="tk" style="left:752.4px;top:705px;transform:translateX(-50%)">65</div>
<div class="tk" style="left:805.9px;top:705px;transform:translateX(-50%)">70</div>
<div class="tk" style="left:859.4px;top:705px;transform:translateX(-50%)">75</div>
<div class="tk" style="left:913.0px;top:705px;transform:translateX(-50%)">80</div>
<div class="tk" style="left:966.5px;top:705px;transform:translateX(-50%)">85</div>
<div class="tk" style="left:1020.0px;top:705px;transform:translateX(-50%)">90</div>
<div class="tk" style="left:1073.6px;top:705px;transform:translateX(-50%)">95</div>
<div class="tk" style="left:1127.1px;top:705px;transform:translateX(-50%)">100</div>
<div class="a" style="left:1132px;top:692px;width:50px;height:24px;background:#f2f2f2"></div>
<div class="a" style="left:52px;top:693px;width:9px;height:22px;background:#8a8830;border:1px solid #a8a640"></div>
<div class="tk" style="left:53px;top:704px;color:#c8c880">0</div>

<!-- ============ STATUS BAR ============ -->
<div class="a" style="left:1px;top:716px;width:1365px;height:52px;background:#ededed"></div>
<div class="a" style="left:0;top:765px;width:1366px;height:3px;background:#9a9ca4"></div>
<div class="a" style="left:3px;top:718px;width:95px;height:23px;background:#e8cccc;border-top:1px solid #a89090;border-bottom:1px solid #a89090"></div>
<div class="a" style="left:3px;top:743px;width:95px;height:22px;background:#fafafa;border-top:1px solid #999;border-left:1px solid #999"></div>
<div class="t" style="left:7px;top:745px;font-family:'Liberation Mono',monospace;font-size:12px;color:#333">Welcome to M</div>
<div class="a" style="left:105px;top:716px;width:1px;height:49px;background:#c8c8c8"></div>
<div class="a" style="left:108px;top:720px;width:415px;height:26px;border-top:1px solid #dcdcdc;border-left:1px solid #dcdcdc;background:#f1f1f1"></div>
<div class="a" style="left:108px;top:746px;width:690px;height:1px;background:#b8b8b8"></div>
<div class="a" style="left:108px;top:747px;width:690px;height:18px;border-left:1px solid #dcdcdc;background:#f1f1f1"></div>
<div class="t" style="left:115px;top:725px;font-size:11px;color:#222;letter-spacing:-0.35px">1 Shape Selected</div>
<div class="t" style="left:113px;top:751px;font-size:11px;color:#222">Click and drag to rotate the view.&nbsp; Clicking in the tabs constrains the rotation</div>
<!-- lock + abs -->
<svg style="left:528px;top:724px" width="14" height="15"><path d="M3.5 6 V4 a3.5 3.5 0 0 1 7 0 V6" fill="none" stroke="#bbb" stroke-width="1.6"/><rect x="1" y="6" width="12" height="8" rx="1" fill="#c8c8c8"/></svg>
<svg style="left:553px;top:723px" width="16" height="16"><rect x="1" y="1" width="14" height="14" fill="#f0f0f0" stroke="#555" stroke-width="1.2"/><circle cx="8" cy="8" r="3.5" fill="none" stroke="#555"/><path d="M8 2 V14 M2 8 H14" stroke="#555"/></svg>
<div class="t" style="left:577px;top:726px;font-size:11px;color:#222">X:</div>
<div class="a" style="left:588px;top:722px;width:55px;height:19px;border-top:1px solid #444;border-left:2px solid #444;background:#f1f1f1"></div>
<div class="t" style="left:592px;top:726px;font-size:11px;color:#9a9a9a">168,549</div>
<div class="t" style="left:659px;top:726px;font-size:11px;color:#222">Y:</div>
<div class="a" style="left:670px;top:722px;width:55px;height:19px;border-top:1px solid #444;border-left:2px solid #444;background:#f1f1f1"></div>
<div class="t" style="left:673px;top:726px;font-size:11px;color:#9a9a9a">-144,884</div>
<div class="t" style="left:740px;top:726px;font-size:11px;color:#222">Z:</div>
<div class="a" style="left:752px;top:722px;width:55px;height:19px;border-top:1px solid #444;border-left:2px solid #444;background:#f1f1f1"></div>
<div class="t" style="left:755px;top:726px;font-size:11px;color:#9a9a9a">0,0</div>
<!-- isolate -->
<div class="a" style="left:800px;top:745px;width:20px;height:21px;border:1px solid #4a80b0;border-radius:2px;background:linear-gradient(180deg,#a8cce8,#6a9ecc)"></div>
<div class="a" style="left:804px;top:750px;width:12px;height:12px;background:#f4f4f4;border-radius:2px"></div>
<!-- grid panel -->
<div class="a" style="left:823px;top:721px;width:99px;height:22px;border-top:1px solid #d4d4d4;border-left:1px solid #d4d4d4;background:#f1f1f1"></div>
<div class="a" style="left:823px;top:744px;width:99px;height:1px;background:#bdbdbd"></div>
<div class="t" style="left:829px;top:725px;font-size:11px;color:#222">Grid = 10,0</div>
<div class="a" style="left:823px;top:745px;width:99px;height:20px;border-left:1px solid #d4d4d4;background:#f1f1f1"></div>
<div class="t" style="left:829px;top:750px;font-size:11px;color:#222">Add Time Tag</div>
<!-- key -->
<div class="a" style="left:928px;top:721px;width:41px;height:42px;border:1px solid #a8a8a8;border-radius:2px;background:linear-gradient(180deg,#f8f8f8,#e4e4e4)"></div>
<svg style="left:936px;top:736px" width="26" height="12"><circle cx="5" cy="6" r="4" fill="none" stroke="#111" stroke-width="2.2"/><path d="M9 6 H24 M18 6 v4 M22 6 v4" stroke="#111" stroke-width="2.4"/></svg>
<div class="btn" style="left:974px;top:722px;width:45px;height:18px;line-height:16px;font-size:11px;border-color:#9a9a9a">Auto Key</div>
<div class="btn" style="left:975px;top:743px;width:44px;height:18px;line-height:16px;font-size:11px;border-color:#9a9a9a">Set Key</div>
<div class="a" style="left:1024px;top:721px;width:116px;height:19px;border:1px solid #a0a0a0;border-radius:3px;background:linear-gradient(180deg,#fafafa,#e2e2e2)"></div>
<div class="t" style="left:1027px;top:724px;font-size:11px;color:#222">Selected</div>
<svg style="left:1127px;top:729px" width="8" height="6"><path d="M0 0h7l-3.5 4.5z" fill="#111"/></svg>
<svg style="left:1026px;top:744px" width="22" height="18"><path d="M2 14 L5 10 L8 15 L11 2 L15 4" fill="none" stroke="#c03030" stroke-width="1.3"/><path d="M14 1 l3 3" stroke="#555"/><rect x="19" y="15" width="2" height="2" fill="#222"/></svg>
<div class="btn" style="left:1051px;top:744px;width:88px;height:18px;line-height:16px;font-size:11px;border-color:#9a9a9a">Key Filters...</div>
<!-- playback -->
<svg style="left:1146px;top:720px" width="120" height="20">
 <g fill="#222"><rect x="2" y="3" width="3" height="12"/><path d="M5 9 L11 3 V15z"/><path d="M10 9 L16 3 V15z"/>
 <path d="M28 9 L35 3 V15z"/><rect x="35" y="4" width="2" height="10"/><rect x="38" y="4" width="2" height="10"/><rect x="41" y="4" width="2" height="10"/>
 <path d="M54 3 L63 9 L54 15z"/>
 <rect x="75" y="4" width="2" height="10"/><rect x="78" y="4" width="2" height="10"/><rect x="81" y="4" width="2" height="10"/><path d="M83 3 L90 9 L83 15z"/>
 <path d="M100 3 L106 9 L100 15z"/><path d="M105 3 L111 9 L105 15z"/><rect x="111" y="3" width="3" height="12"/></g>
 <path d="M23 2 V17 M96 2 V17" stroke="#c8c8c8"/>
 <rect x="61" y="17" width="2" height="2" fill="#222"/>
</svg>
<svg style="left:1146px;top:743px" width="20" height="20"><g fill="#222"><rect x="2" y="3" width="2" height="12"/><rect x="15" y="3" width="2" height="12"/><path d="M4 9 l5-4 v8z"/><path d="M15 9 l-5-4 v8z"/></g></svg>
<div class="a" style="left:1172px;top:743px;width:60px;height:20px;background:#fbfbfb;border-top:2px solid #555;border-left:2px solid #555"></div>
<div class="t" style="left:1175px;top:747px;font-size:11px;color:#222">0</div>
<svg style="left:1237px;top:744px" width="10" height="18"><path d="M1 7 L4.5 2 L8 7z M1 11 L4.5 16 L8 11z" fill="#bbb"/></svg>
<!-- nav icons -->
<svg style="left:1272px;top:719px" width="94" height="46">
 <circle cx="9" cy="8" r="6" fill="none" stroke="#888" stroke-width="1.6"/><path d="M13 12 L18 17" stroke="#444" stroke-width="2.6"/><path d="M18 1 v5 M15.5 3.5 h5" stroke="#666" stroke-width="1.2"/>
 <g fill="#eee" stroke="#999" stroke-width="1.2"><rect x="27" y="2" width="7" height="7"/><rect x="35" y="2" width="7" height="7"/><rect x="27" y="10" width="7" height="7"/><rect x="35" y="10" width="7" height="7"/></g>
 <g fill="#8ab060" stroke="#5a7a40"><rect x="74" y="7" width="10" height="10"/></g><g fill="#ddd" stroke="#999"><rect x="76" y="1" width="7" height="7"/><rect x="84" y="1" width="7" height="7"/><rect x="84" y="9" width="7" height="7"/></g>
 <path d="M7 28 L22 36 L7 42z" fill="none" stroke="#999" stroke-width="1.4"/>
 <path d="M30 44 q-4-6 -2-10 l3 3 v-9 a1.3 1.3 0 0 1 2.6 0 v6 v-8 a1.3 1.3 0 0 1 2.6 0 v8 v-7 a1.3 1.3 0 0 1 2.6 0 v7 v-5 a1.3 1.3 0 0 1 2.6 0 v9 q0 6-4 6z" fill="#f4f4f4" stroke="#777" stroke-width="1.1"/>
</svg>
<svg style="left:1252px;top:744px" width="20" height="20"><rect x="1" y="1" width="16" height="16" fill="#ccc" stroke="#666"/><rect x="3" y="3" width="6" height="6" fill="#666"/><circle cx="14" cy="14" r="4" fill="#eee" stroke="#555"/></svg>
<!-- blue watermark -->
<svg style="left:1296px;top:702px" width="48" height="44"><path d="M25 3 L33 13 L34 26 L43 34 L44 40 H8 L16 36 L17 8z" fill="#4f6ff2"/><path d="M20 9 L31 15 M20 13 L32 19 M20 17 L32 23 M20 21 L33 27 M21 25 L36 31 M22 29 L39 35 M23 33 L40 38" stroke="#d8e4ff" stroke-width="1.1"/><path d="M6 40 H44" stroke="#4f6ff2" stroke-width="2.5"/></svg>
<div class="a" style="left:1320px;top:744px;width:21px;height:20px;border:2px solid #2a5a9a;border-radius:2px;background:linear-gradient(180deg,#8ac0ec,#3a78c0)"></div>
<svg style="left:1323px;top:746px" width="16" height="16"><path d="M8 2 V12 M3 12 H13" stroke="#1a3a1a" stroke-width="2"/><circle cx="8" cy="8" r="3.5" fill="#4a8a3a"/></svg>
<svg style="left:1344px;top:743px" width="20" height="22"><rect x="1" y="1" width="13" height="13" fill="#f0f0f0" stroke="#777" stroke-width="1.2"/><path d="M4 4 l5 5 M4 4 h3 M4 4 v3" stroke="#222" stroke-width="1.5"/><rect x="8" y="12" width="9" height="8" fill="none" stroke="#999"/></svg>

<div class="a" style="left:1364px;top:22px;width:2px;height:746px;background:#050505"></div>
</body></html>
